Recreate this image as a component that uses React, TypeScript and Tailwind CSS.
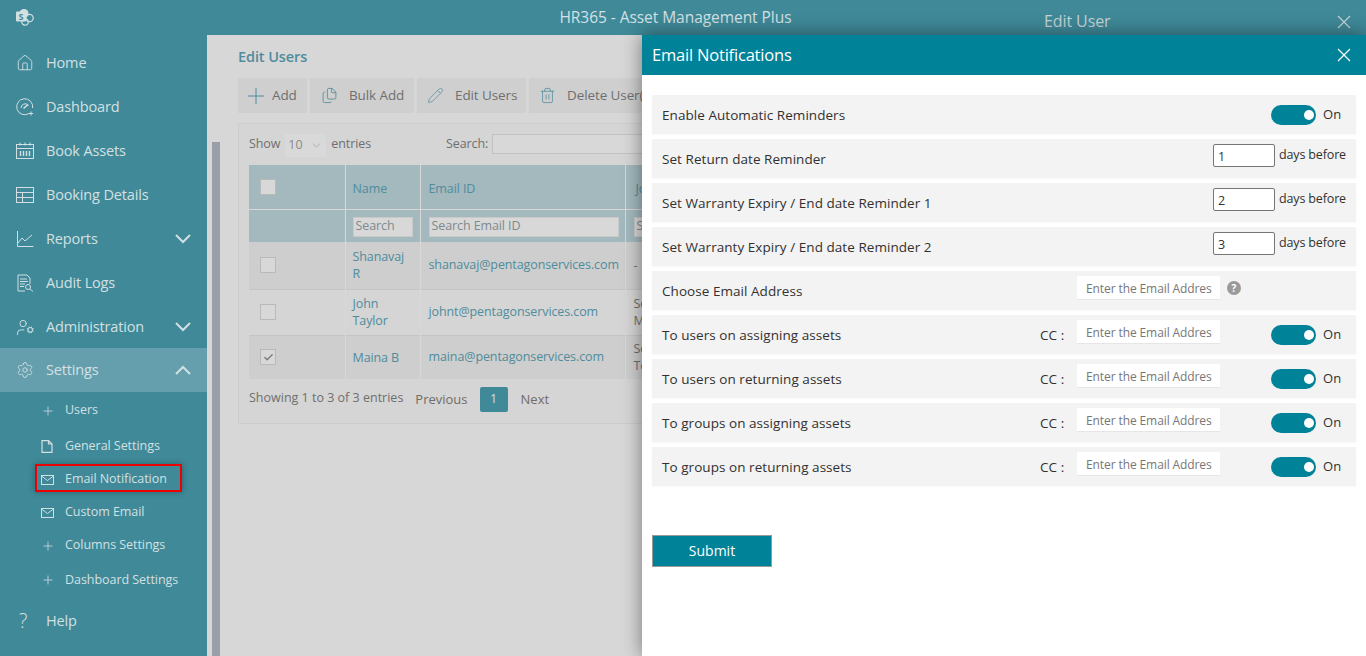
import { ChevronDown, Plus, Settings, Files, Pencil, Trash2, Check, Home, UserCog } from 'lucide-react';
import type { ReactNode } from 'react';

const font = "font-['Open_Sans','Noto_Sans',sans-serif]";

function Gauge() {
  return (
    <svg width="18" height="18" viewBox="0 0 18 18" fill="none" stroke="currentColor" strokeWidth="1">
      <path d="M13 15.500A8 8 0 1 1 16.600 10" />
      <path d="M5 10a4.200 4.200 0 0 1 7.500-2.600" />
      <path d="M7.500 10.500 12 6.500" strokeWidth="1.600" />
      <path d="M13 15.500h4M15 13.500v4" />
    </svg>
  );
}

function Calendar() {
  return (
    <svg width="18" height="18" viewBox="0 0 18 18" fill="none" stroke="currentColor" strokeWidth="1">
      <rect x="0.500" y="2.500" width="17" height="14" />
      <path d="M0.500 6.500h17M4 0.500v3M9 0.500v3M14 0.500v3" />
      <path d="M4.500 9v5M7.500 9v5M10.500 9v5M13.500 9v5" strokeWidth="1.400" />
    </svg>
  );
}

function Grid() {
  return (
    <svg width="18" height="18" viewBox="0 0 18 18" fill="none" stroke="currentColor" strokeWidth="1">
      <rect x="0.500" y="1.500" width="17" height="15" />
      <path d="M0.500 6.500h17M0.500 11.500h17M6.500 6.500v10" />
    </svg>
  );
}

function Chart() {
  return (
    <svg width="18" height="18" viewBox="0 0 18 18" fill="none" stroke="currentColor" strokeWidth="1">
      <path d="M1.500 1v15.500h16" />
      <path d="M2 13l4-5 3 3 7-6" />
    </svg>
  );
}

function AuditDoc() {
  return (
    <svg width="18" height="18" viewBox="0 0 18 18" fill="none" stroke="currentColor" strokeWidth="1">
      <path d="M9 17H2V1h9l3 3v6" />
      <path d="M4 5h7M4 7.500h8M4 10h5M4 12.500h4" />
      <circle cx="12" cy="13" r="2.500" />
      <path d="M14 15l3 2.500" />
    </svg>
  );
}

function PageIcon() {
  return (
    <svg width="12" height="13" viewBox="0 0 12 13" fill="none" stroke="currentColor" strokeWidth="1.200">
      <path d="M1 .7h6.500L11 4v8.300H1z" />
      <path d="M7.500.7V4H11" />
    </svg>
  );
}

function MailIcon() {
  return (
    <svg width="13" height="10" viewBox="0 0 13 10" fill="none" stroke="currentColor" strokeWidth="1">
      <rect x="0.500" y="0.500" width="12" height="9" />
      <path d="M0.500 1l6 4.500 6-4.500" />
    </svg>
  );
}

function Logo() {
  return (
    <svg width="18" height="18" viewBox="0 0 18 18">
      <circle cx="8" cy="5.500" r="4.500" fill="#d3e0e3" />
      <circle cx="13.500" cy="10" r="3.700" fill="none" stroke="#d3e0e3" strokeWidth="1.200" />
      <circle cx="9" cy="14" r="3.200" fill="none" stroke="#d3e0e3" strokeWidth="1.200" />
      <rect x="0" y="3.500" width="10" height="10" rx="1" fill="#d3e0e3" />
      <text x="5" y="11.500" textAnchor="middle" fontSize="9" fontWeight="700" fill="#3f8998" fontFamily="Open Sans">S</text>
    </svg>
  );
}

function Chevron({ up }: { up?: boolean }) {
  return (
    <svg width="16" height="10" viewBox="0 0 16 10" fill="none" stroke="currentColor" strokeWidth="2">
      <path d={up ? 'M1 9l7-7 7 7' : 'M1 1l7 7 7-7'} />
    </svg>
  );
}

function CloseX() {
  return (
    <svg width="14" height="14" viewBox="0 0 14 14" fill="none" stroke="currentColor" strokeWidth="1.200">
      <path d="M1 1l12 12M13 1L1 13" />
    </svg>
  );
}

function PlusThin() {
  return (
    <svg width="16" height="16" viewBox="0 0 16 16" fill="none" stroke="currentColor" strokeWidth="1">
      <path d="M0 8h16M8 0v16" />
    </svg>
  );
}

function NavItem({ icon, label, chevron, active }: { icon: ReactNode; label: string; chevron?: 'up' | 'down'; active?: boolean }) {
  return (
    <div className={`flex h-[44px] items-center pl-[16px] pr-[16px] text-[14.500px] ${active ? 'bg-[#659fae]' : ''}`}>
      <span className="flex w-[30px] items-center">{icon}</span>
      <span className="flex-1 tracking-[-0.15px]">{label}</span>
      {chevron === 'down' && <Chevron />}
      {chevron === 'up' && <Chevron up />}
    </div>
  );
}

function SubItem({ icon, label, h, boxed }: { icon: ReactNode; label: string; h: string; boxed?: boolean }) {
  return (
    <div className={`flex ${h} items-center pl-[41px] text-[12.500px] tracking-[-0.05px]`}>
      <div className={boxed ? 'relative flex items-center' : 'flex items-center'}>
        {boxed && <div className="absolute left-[-6px] top-[-6px] h-[28px] w-[147px] border-2 border-[#ee0000] shadow-[0_0_6px_rgba(0,0,0,0.3)]" />}
        <span className="flex w-[24px] items-center">{icon}</span>
        <span>{label}</span>
      </div>
    </div>
  );
}

function Toolbtn({ icon, label, cls }: { icon: ReactNode; label: string; cls: string }) {
  return (
    <div className={`flex h-[35px] ${cls} shrink-0 items-center bg-[#cfcfcf] text-[13.500px] tracking-[-0.1px] text-[#6f6f6f]`}>
      {icon}
      <span>{label}</span>
    </div>
  );
}

const users = [
  { name: 'Shanavaj R', email: 'shanavaj@pentagonservices.com', job: '-', bg: 'bg-[#cecece]', h: 'h-[47px]', checked: false },
  { name: 'John Taylor', email: 'johnt@pentagonservices.com', job: 'Senior Manager', bg: 'bg-[#d5d5d5]', h: 'h-[46px]', checked: false },
  { name: 'Maina B', email: 'maina@pentagonservices.com', job: 'Senior Technician', bg: 'bg-[#cecece]', h: 'h-[44px]', checked: true },
];

function Box({ checked }: { checked?: boolean }) {
  return (
    <div className="ml-[11px] flex h-[16px] w-[16px] items-center justify-center border border-[#b9b9b9] bg-[#d8d8d8] text-[#7c7c7c]">
      {checked && <Check size={11} strokeWidth={3} />}
    </div>
  );
}

function Toggle() {
  return (
    <div className="flex h-[20px] w-[45px] items-center justify-end rounded-full bg-[#008299] pr-[1px]">
      <div className="mr-[1px] h-[10px] w-[10px] rounded-full bg-white" />
    </div>
  );
}

function Row({ children }: { children: ReactNode }) {
  return <div className="mb-[5px] flex h-[39px] items-center bg-[#f3f3f3] pl-[10px] text-[13.500px] font-medium tracking-[0.05px] text-[#323130] shadow-[0_1px_2px_rgba(0,0,0,0.03)]">{children}</div>;
}

function OnLabel() {
  return <span className="w-[40px] shrink-0 pl-[7px] text-[13px] font-normal text-[#323130]">On</span>;
}

function EmailInput() {
  return (
    <input
      readOnly
      placeholder="Enter the Email Address"
      className="mt-[-5px] h-[24px] w-[143px] border-b border-[#e6e6e6] bg-white pl-[9px] pr-[8px] pt-[1px] text-[12px] font-normal tracking-[-0.1px] outline-none placeholder:text-[#777]"
    />
  );
}

function DaysRow({ label, value }: { label: string; value: string }) {
  return (
    <Row>
      <span className="mt-[2px] flex-1">{label}</span>
      <input readOnly value={value} className="mt-[-6px] h-[23px] w-[62px] rounded-[2px] border border-[#767676] bg-white px-[4px] pt-[2px] text-[12.500px] font-normal outline-none" />
      <span className="ml-[4px] mr-[10px] mt-[-7px] text-[12.500px] font-normal tracking-[-0.15px]">days before</span>
    </Row>
  );
}

function CcRow({ label }: { label: string }) {
  return (
    <Row>
      <span className="mt-[2px] w-[378px]">{label}</span>
      <span className="mt-[2px] w-[37px]">CC :</span>
      <EmailInput />
      <div className="ml-[51px] flex items-center">
        <Toggle />
        <OnLabel />
      </div>
    </Row>
  );
}

export default function App() {
  return (
    <div className={`relative h-screen overflow-hidden bg-[#d7d7d7] ${font}`}>
      <div className="relative flex h-[35px] items-center justify-center bg-[#3f8998] pr-[15px] text-[15.500px] tracking-[-0.05px] text-[#d3e0e3]">
        <div className="absolute left-[16px] top-[8px]"><Logo /></div>
        HR365 - Asset Management Plus
      </div>
      <div className="flex h-[621px]">
        <aside className="w-[207px] shrink-0 bg-[#3f8998] text-[#d3e0e3]">
          <div className="mt-[5px] pt-[1px]">
            <NavItem icon={<Home size={18} strokeWidth={1.200} />} label="Home" />
            <NavItem icon={<Gauge />} label="Dashboard" />
            <NavItem icon={<Calendar />} label="Book Assets" />
            <NavItem icon={<Grid />} label="Booking Details" />
            <NavItem icon={<Chart />} label="Reports" chevron="down" />
            <NavItem icon={<AuditDoc />} label="Audit Logs" />
            <NavItem icon={<UserCog size={19} strokeWidth={1.200} />} label="Administration" chevron="down" />
          </div>
          <div className="mt-[-1px]">
            <NavItem icon={<Settings size={18} strokeWidth={1.200} />} label="Settings" chevron="up" active />
          </div>
          <SubItem icon={<Plus size={14} strokeWidth={1.300} />} label="Users" h="h-[37px]" />
          <SubItem icon={<PageIcon />} label="General Settings" h="h-[35px]" />
          <SubItem icon={<MailIcon />} label="Email Notification" h="h-[31px]" boxed />
          <SubItem icon={<MailIcon />} label="Custom Email" h="h-[35px]" />
          <SubItem icon={<Plus size={14} strokeWidth={1.300} />} label="Columns Settings" h="h-[31px]" />
          <SubItem icon={<Plus size={14} strokeWidth={1.300} />} label="Dashboard Settings" h="h-[38px]" />
          <NavItem icon={<span className="pl-[3px] text-[20px] font-light leading-none">?</span>} label="Help" />
        </aside>
        <main className="relative flex min-w-0 flex-1 overflow-hidden bg-[#d7d7d7]">
          <div className="ml-[5px] mt-[107px] h-[514px] w-[8px] shrink-0 bg-[#9a9ea6]" />
          <div className="ml-[18px] w-[1100px] shrink-0 pt-[12px]">
            <h1 className="text-[14.500px] font-semibold leading-[20px] tracking-[-0.1px] text-[#4f8c9c]">Edit Users</h1>
            <div className="mt-[11px] flex gap-[3px]">
              <Toolbtn icon={<span className="text-[#4f8c9c]"><PlusThin /></span>} label="Add" cls="w-[69px] gap-[8px] pl-[10px]" />
              <Toolbtn icon={<Files size={17} strokeWidth={1.200} className="text-[#4f8c9c]" />} label="Bulk Add" cls="w-[104px] gap-[11px] pl-[11px]" />
              <Toolbtn icon={<Pencil size={17} strokeWidth={1} className="text-[#4f8c9c]" />} label="Edit Users" cls="w-[109px] gap-[11px] pl-[10px]" />
              <Toolbtn icon={<Trash2 size={17} strokeWidth={1.100} className="text-[#4f8c9c]" />} label="Delete User(s)" cls="w-[150px] gap-[11px] pl-[10px]" />
            </div>
            <div className="mt-[10px] h-[301px] border border-[#cdcdcd] bg-[#d5d5d5] px-[10px] pt-[10px]">
              <div className="flex h-[31px] items-start text-[12.500px] tracking-[-0.1px] text-[#6f6f6f]">
                <span className="mt-[1px]">Show</span>
                <div className="ml-[5px] flex h-[23px] w-[41px] items-center justify-between bg-[#d9d9d9] pl-[3px] pr-[3px] text-[#8a8a8a]">
                  10 <ChevronDown size={13} strokeWidth={1} />
                </div>
                <span className="ml-[5px] mt-[1px]">entries</span>
                <span className="ml-[75px] mt-[1px]">Search:</span>
                <div className="ml-[4px] h-[20px] w-[300px] border border-[#c2c2c2] bg-[#d8d8d8]" />
              </div>
              <table className="table-fixed border-collapse text-[12.500px] tracking-[-0.1px] text-[#4f8c9c]">
                <colgroup>
                  <col className="w-[96px]" />
                  <col className="w-[75px]" />
                  <col className="w-[205px]" />
                  <col className="w-[100px]" />
                </colgroup>
                <thead className="bg-[#a3b9be]">
                  <tr className="h-[44px] border-b border-[#d8d8d8]">
                    <th className="border-r border-[#d8d8d8] p-0 text-left font-normal"><Box /></th>
                    <th className="border-r border-[#d8d8d8] pl-[7px] pt-[5px] text-left font-normal">Name</th>
                    <th className="border-r border-[#d8d8d8] pl-[8px] pt-[5px] text-left font-normal">Email ID</th>
                    <th className="pl-[10px] pt-[5px] text-left font-normal">Job Title</th>
                  </tr>
                  <tr className="h-[33px]">
                    <th className="border-r border-[#d8d8d8]" />
                    <th className="border-r border-[#d8d8d8] pl-[7px] pt-[2px] font-normal"><div className="flex h-[20px] w-[60px] items-center border border-[#c9c9c9] bg-[#d8d8d8] pl-[2px] text-[#7f8a8c]">Search</div></th>
                    <th className="border-r border-[#d8d8d8] pl-[8px] pt-[2px] font-normal"><div className="flex h-[20px] w-[190px] items-center border border-[#c9c9c9] bg-[#d8d8d8] pl-[2px] text-[#7f8a8c]">Search Email ID</div></th>
                    <th className="pl-[8px] pt-[2px] font-normal"><div className="flex h-[20px] w-[80px] items-center overflow-hidden whitespace-nowrap border border-[#c9c9c9] bg-[#d8d8d8] pl-[2px] text-[#7f8a8c]">Search Job</div></th>
                  </tr>
                </thead>
                <tbody>
                  {users.map((u) => (
                    <tr key={u.email} className={`${u.h} ${u.bg} border-b border-[#c4c4c4] last:border-b-0`}>
                      <td className="border-r border-[#d8d8d8] p-0"><Box checked={u.checked} /></td>
                      <td className="border-r border-[#d8d8d8] pl-[7px] pr-[12px] leading-[17px]">{u.name}</td>
                      <td className="border-r border-[#d8d8d8] pl-[8px]">{u.email}</td>
                      <td className="pl-[8px] pr-[30px] leading-[17px] text-[#6f6f6f]">{u.job}</td>
                    </tr>
                  ))}
                </tbody>
              </table>
              <div className="mt-[8px] flex h-[25px] items-center text-[12.500px] text-[#6f6f6f]">
                <span className="mt-[-2px]">Showing 1 to 3 of 3 entries</span>
                <span className="ml-[12px] mt-[1px] text-[13px] text-[#716c66]">Previous</span>
                <span className="ml-[12px] flex h-[25px] w-[28px] items-center justify-center rounded-[2px] bg-[#3f8998] text-[#d3e0e3]">1</span>
                <span className="ml-[13px] mt-[1px] text-[13px] text-[#716c66]">Next</span>
              </div>
            </div>
          </div>
        </main>
      </div>

      {/* edit user panel peeking out behind the email panel */}
      <div className="absolute right-0 top-0 flex h-[35px] w-[322px] items-center justify-between pr-[15px] text-[#c3d3d7]">
        <span className="mt-[6px] text-[16px] tracking-[-0.1px]">Edit User</span>
        <span className="mt-[9px]"><CloseX /></span>
      </div>

      <div className="absolute bottom-0 right-0 top-[35px] w-[724px] bg-white shadow-[0_0_18px_rgba(0,0,0,0.45)]">
        <div className="flex h-[40px] items-center justify-between bg-[#008299] pl-[10px] pr-[15px] text-[16.500px] tracking-[-0.2px] text-white">
          <span className="mt-[1px]">Email Notifications</span>
          <CloseX />
        </div>
        <div className="px-[10px] pt-[20px]">
          <Row>
            <span className="mt-[2px] flex-1">Enable Automatic Reminders</span>
            <Toggle />
            <OnLabel />
          </Row>
          <DaysRow label="Set Return date Reminder" value="1" />
          <DaysRow label="Set Warranty Expiry / End date Reminder 1" value="2" />
          <DaysRow label="Set Warranty Expiry / End date Reminder 2" value="3" />
          <Row>
            <span className="mt-[2px] w-[415px]">Choose Email Address</span>
            <EmailInput />
            <span className="ml-[7px] mt-[-5px] flex h-[14px] w-[14px] items-center justify-center rounded-full bg-[#9a9a9a] text-[10px] font-bold text-white">?</span>
          </Row>
          <CcRow label="To users on assigning assets" />
          <CcRow label="To users on returning assets" />
          <CcRow label="To groups on assigning assets" />
          <CcRow label="To groups on returning assets" />
          <button className="mt-[44px] h-[32px] w-[120px] border border-[#999] bg-[#008299] pb-[2px] text-[14px] text-white">Submit</button>
        </div>
      </div>
    </div>
  );
}
